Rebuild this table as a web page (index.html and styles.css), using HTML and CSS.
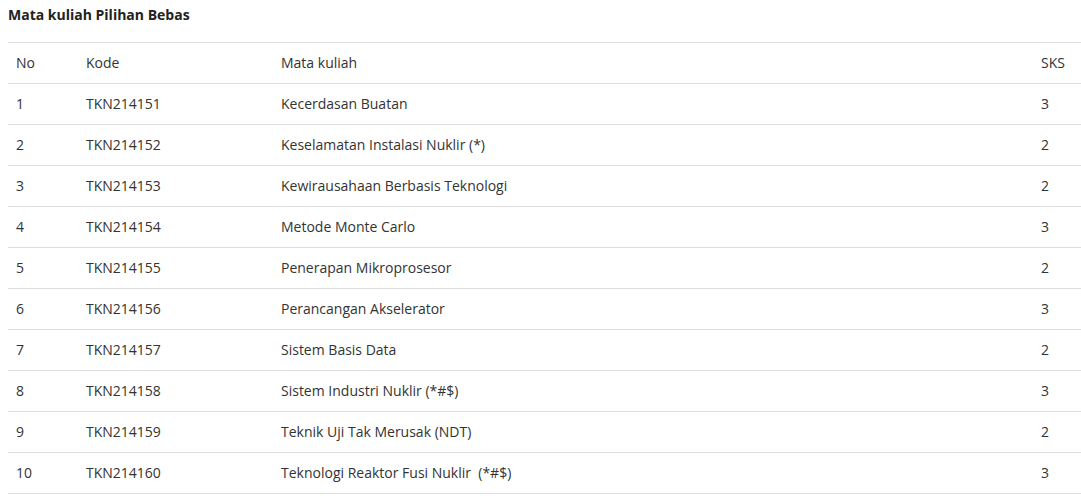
FILE: index.html
```html
<!DOCTYPE html>
<html>
<head>
<meta charset="utf-8">
<link rel="stylesheet" href="styles.css">
</head>
<body>
<div class="wrap">
  <h4 class="title">Mata kuliah Pilihan Bebas</h4>
  <table class="tbl">
    <colgroup>
      <col class="c-no"><col class="c-kode"><col class="c-mk"><col class="c-sks">
    </colgroup>
    <thead>
      <tr><th>No</th><th>Kode</th><th>Mata kuliah</th><th>SKS</th></tr>
    </thead>
    <tbody>
      <tr><td>1</td><td>TKN214151</td><td>Kecerdasan Buatan</td><td>3</td></tr>
      <tr><td>2</td><td>TKN214152</td><td>Keselamatan Instalasi Nuklir (*)</td><td>2</td></tr>
      <tr><td>3</td><td>TKN214153</td><td>Kewirausahaan Berbasis Teknologi</td><td>2</td></tr>
      <tr><td>4</td><td>TKN214154</td><td>Metode Monte Carlo</td><td>3</td></tr>
      <tr><td>5</td><td>TKN214155</td><td>Penerapan Mikroprosesor</td><td>2</td></tr>
      <tr><td>6</td><td>TKN214156</td><td>Perancangan Akselerator</td><td>3</td></tr>
      <tr><td>7</td><td>TKN214157</td><td>Sistem Basis Data</td><td>2</td></tr>
      <tr><td>8</td><td>TKN214158</td><td>Sistem Industri Nuklir (*#$)</td><td>3</td></tr>
      <tr><td>9</td><td>TKN214159</td><td>Teknik Uji Tak Merusak (NDT)</td><td>2</td></tr>
      <tr><td>10</td><td>TKN214160</td><td>Teknologi Reaktor Fusi Nuklir&nbsp; (*#$)</td><td>3</td></tr>
    </tbody>
  </table>
</div>
</body>
</html>
```
FILE: styles.css
```css
html, body { margin: 0; padding: 0; background: #fff; }
body {
  font-family: "Open Sans", "Liberation Sans", sans-serif;
  font-size: 14px;
  color: #333;
}
.wrap { padding: 0 0 0 8px; }
.title {
  margin: 0;
  padding-top: 4px;
  height: 38px;
  font-size: 14px;
  font-weight: 700;
  color: #222;
  line-height: 22px;
}
.tbl {
  width: 100%;
  border-collapse: collapse;
  border-spacing: 0;
}
.c-no { width: 70px; }
.c-kode { width: 195px; }
.c-sks { width: 48px; }
.tbl th, .tbl td {
  text-align: left;
  font-weight: 400;
  padding: 10px 8px;
  line-height: 20px;
  border-top: 1px solid #ddd;
  vertical-align: top;
  white-space: nowrap;
}
.tbl tbody tr:last-child td { border-bottom: 1px solid #ddd; }
```
